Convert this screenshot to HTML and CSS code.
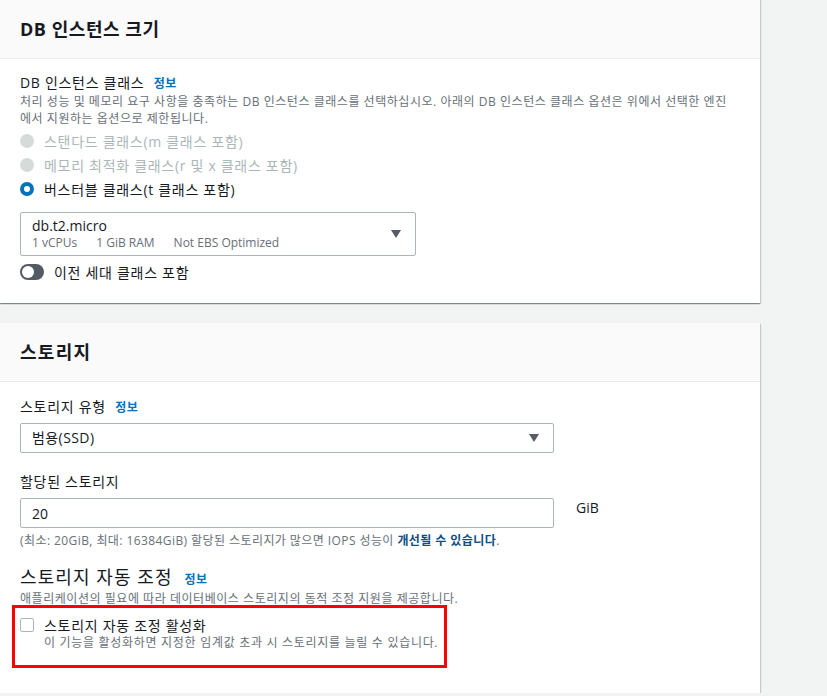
FILE: index.html
```html
<!DOCTYPE html>
<html lang="ko">
<head>
<meta charset="utf-8">
<link rel="stylesheet" href="styles.css">
</head>
<body>
<div class="page">
  <section class="card card-first">
    <header class="card-header"><h2>DB 인스턴스 크기</h2></header>
    <div class="card-body">
      <div class="label">DB 인스턴스 클래스 <a class="info">정보</a></div>
      <div class="desc">처리 성능 및 메모리 요구 사항을 충족하는 DB 인스턴스 클래스를 선택하십시오. 아래의 DB 인스턴스 클래스 옵션은 위에서 선택한 엔진<br>에서 지원하는 옵션으로 제한됩니다.</div>
      <div class="radios">
        <div class="radio-row disabled"><span class="radio"></span>스탠다드 클래스(m 클래스 포함)</div>
        <div class="radio-row disabled"><span class="radio"></span>메모리 최적화 클래스(r 및 x 클래스 포함)</div>
        <div class="radio-row"><span class="radio checked"></span>버스터블 클래스(t 클래스 포함)</div>
      </div>
      <div class="select big">
        <div class="select-text">
          <div class="select-main">db.t2.micro</div>
          <div class="select-sub"><span>1 vCPUs</span><span>1 GiB RAM</span><span>Not EBS Optimized</span></div>
        </div>
        <span class="caret"></span>
      </div>
      <div class="toggle-row"><span class="toggle"><span class="knob"></span></span>이전 세대 클래스 포함</div>
    </div>
  </section>

  <section class="card card-second">
    <header class="card-header"><h2>스토리지</h2></header>
    <div class="card-body">
      <div class="label">스토리지 유형 <a class="info">정보</a></div>
      <div class="select small">
        <div class="select-main">범용(SSD)</div>
        <span class="caret"></span>
      </div>
      <div class="label label-gap">할당된 스토리지</div>
      <div class="input-row">
        <div class="input">20</div>
        <span class="unit">GiB</span>
      </div>
      <div class="hint">(최소: 20GiB, 최대: 16384GiB) 할당된 스토리지가 많으면 IOPS 성능이 <b class="hint-link">개선될 수 있습니다</b>.</div>
      <div class="sub-heading">스토리지 자동 조정 <a class="info">정보</a></div>
      <div class="desc">애플리케이션의 필요에 따라 데이터베이스 스토리지의 동적 조정 지원을 제공합니다.</div>
      <div class="highlight">
        <div class="check-row"><span class="checkbox"></span>스토리지 자동 조정 활성화</div>
        <div class="check-sub">이 기능을 활성화하면 지정한 임계값 초과 시 스토리지를 늘릴 수 있습니다.</div>
      </div>
    </div>
  </section>
</div>
</body>
</html>
```

FILE: styles.css
```css
* { box-sizing: border-box; }
html, body { margin: 0; padding: 0; }
body {
  background: #f2f3f3;
  font-family: "Open Sans", "Noto Sans CJK KR", sans-serif;
  color: #16191f;
  font-size: 14px;
  letter-spacing: 0.05em;
  overflow: hidden;
}
.page {
  width: 760px;
  display: flex;
  flex-direction: column;
  gap: 20px;
}
.card {
  background: #fff;
  box-shadow: 0 1px 1px 0 rgba(0,28,36,.3), 1px 1px 1px 0 rgba(0,28,36,.15), -1px 1px 1px 0 rgba(0,28,36,.15);
}
.card-first { margin-top: -1px; }
.card-header {
  background: #fafafa;
  border-bottom: 1px solid #eaeded;
  height: 59px;
  padding: 0 20px;
  display: flex;
  align-items: center;
}
.card-first .card-header { height: 60px; }
.card-header h2 {
  margin: 0;
  font-size: 18px;
  font-weight: 700;
  line-height: 22px;
  letter-spacing: 0.03em;
}
.card-second .card-header h2 { letter-spacing: 0.07em; }
.card-body { padding: 15px 20px 19px; }
.card-second .card-body { padding: 16px 20px 25px; }
.label {
  font-size: 14px;
  line-height: 18px;
}
.label-gap { margin-top: 20px; }
.info {
  color: #0073bb;
  font-size: 12px;
  font-weight: 700;
  margin-left: 5px;
  letter-spacing: 0.045em;
}
.desc {
  font-size: 12px;
  line-height: 17px;
  color: #687078;
  letter-spacing: 0.045em;
}
.radios { margin-top: 2px; }
.radio-row {
  height: 24px;
  display: flex;
  align-items: center;
  font-size: 14px;
}
.radio-row.disabled { color: #aab7b8; }
.radio {
  width: 14px;
  height: 14px;
  border-radius: 50%;
  background: #d5dbdb;
  margin-right: 10px;
  flex: none;
}
.radio.checked {
  background: #fff;
  border: 4px solid #0073bb;
}
.select {
  border: 1px solid #aab7b8;
  border-radius: 2px;
  display: flex;
  align-items: center;
  justify-content: space-between;
  padding: 0 14px 0 11px;
  letter-spacing: 0;
}
.select.big {
  width: 396px;
  height: 44px;
  margin-top: 11px;
}
.select.small {
  width: 534px;
  height: 30px;
  margin-top: 6px;
}
.select-main { font-size: 14px; line-height: 18px; }
.select.small .select-main { letter-spacing: 0.03em; }
.select-sub {
  font-size: 12px;
  line-height: 16px;
  color: #687078;
  display: flex;
  gap: 19px;
}
.caret {
  width: 0;
  height: 0;
  border-left: 5.5px solid transparent;
  border-right: 5.5px solid transparent;
  border-top: 8px solid #545b64;
}
.toggle-row {
  margin-top: 4px;
  height: 24px;
  display: flex;
  align-items: center;
  font-size: 14px;
}
.toggle {
  width: 24px;
  height: 16px;
  border-radius: 8px;
  background: #545b64;
  margin-right: 10px;
  display: flex;
  align-items: center;
  padding-left: 2px;
}
.knob {
  width: 12px;
  height: 12px;
  border-radius: 50%;
  background: #fff;
}
.input-row {
  margin-top: 7px;
  display: flex;
  align-items: flex-start;
  letter-spacing: 0;
}
.input {
  width: 534px;
  height: 30px;
  border: 1px solid #aab7b8;
  border-radius: 2px;
  padding: 0 11px;
  display: flex;
  align-items: center;
  font-size: 14px;
}
.unit {
  margin-left: 22px;
  font-size: 14px;
  line-height: 20px;
}
.hint {
  margin-top: 4px;
  font-size: 12px;
  line-height: 17px;
  color: #687078;
  letter-spacing: 0.035em;
}
.hint-link { color: #0e4e83; font-weight: 700; }
.sub-heading {
  margin-top: 18px;
  font-size: 18px;
  line-height: 20px;
  letter-spacing: 0.06em;
}
.sub-heading .info { margin-left: 6px; }
.highlight {
  margin: -2px 0 0 -8px;
  width: 435px;
  border: 3px solid #ff0000;
  padding: 8px 5px 14px;
}
.check-row {
  display: flex;
  align-items: center;
  height: 18px;
  font-size: 14px;
}
.checkbox {
  width: 14px;
  height: 14px;
  border: 1px solid #aab7b8;
  border-radius: 2px;
  margin-right: 10px;
  flex: none;
}
.check-sub {
  padding-left: 24px;
  font-size: 12px;
  line-height: 17px;
  color: #687078;
}
```
